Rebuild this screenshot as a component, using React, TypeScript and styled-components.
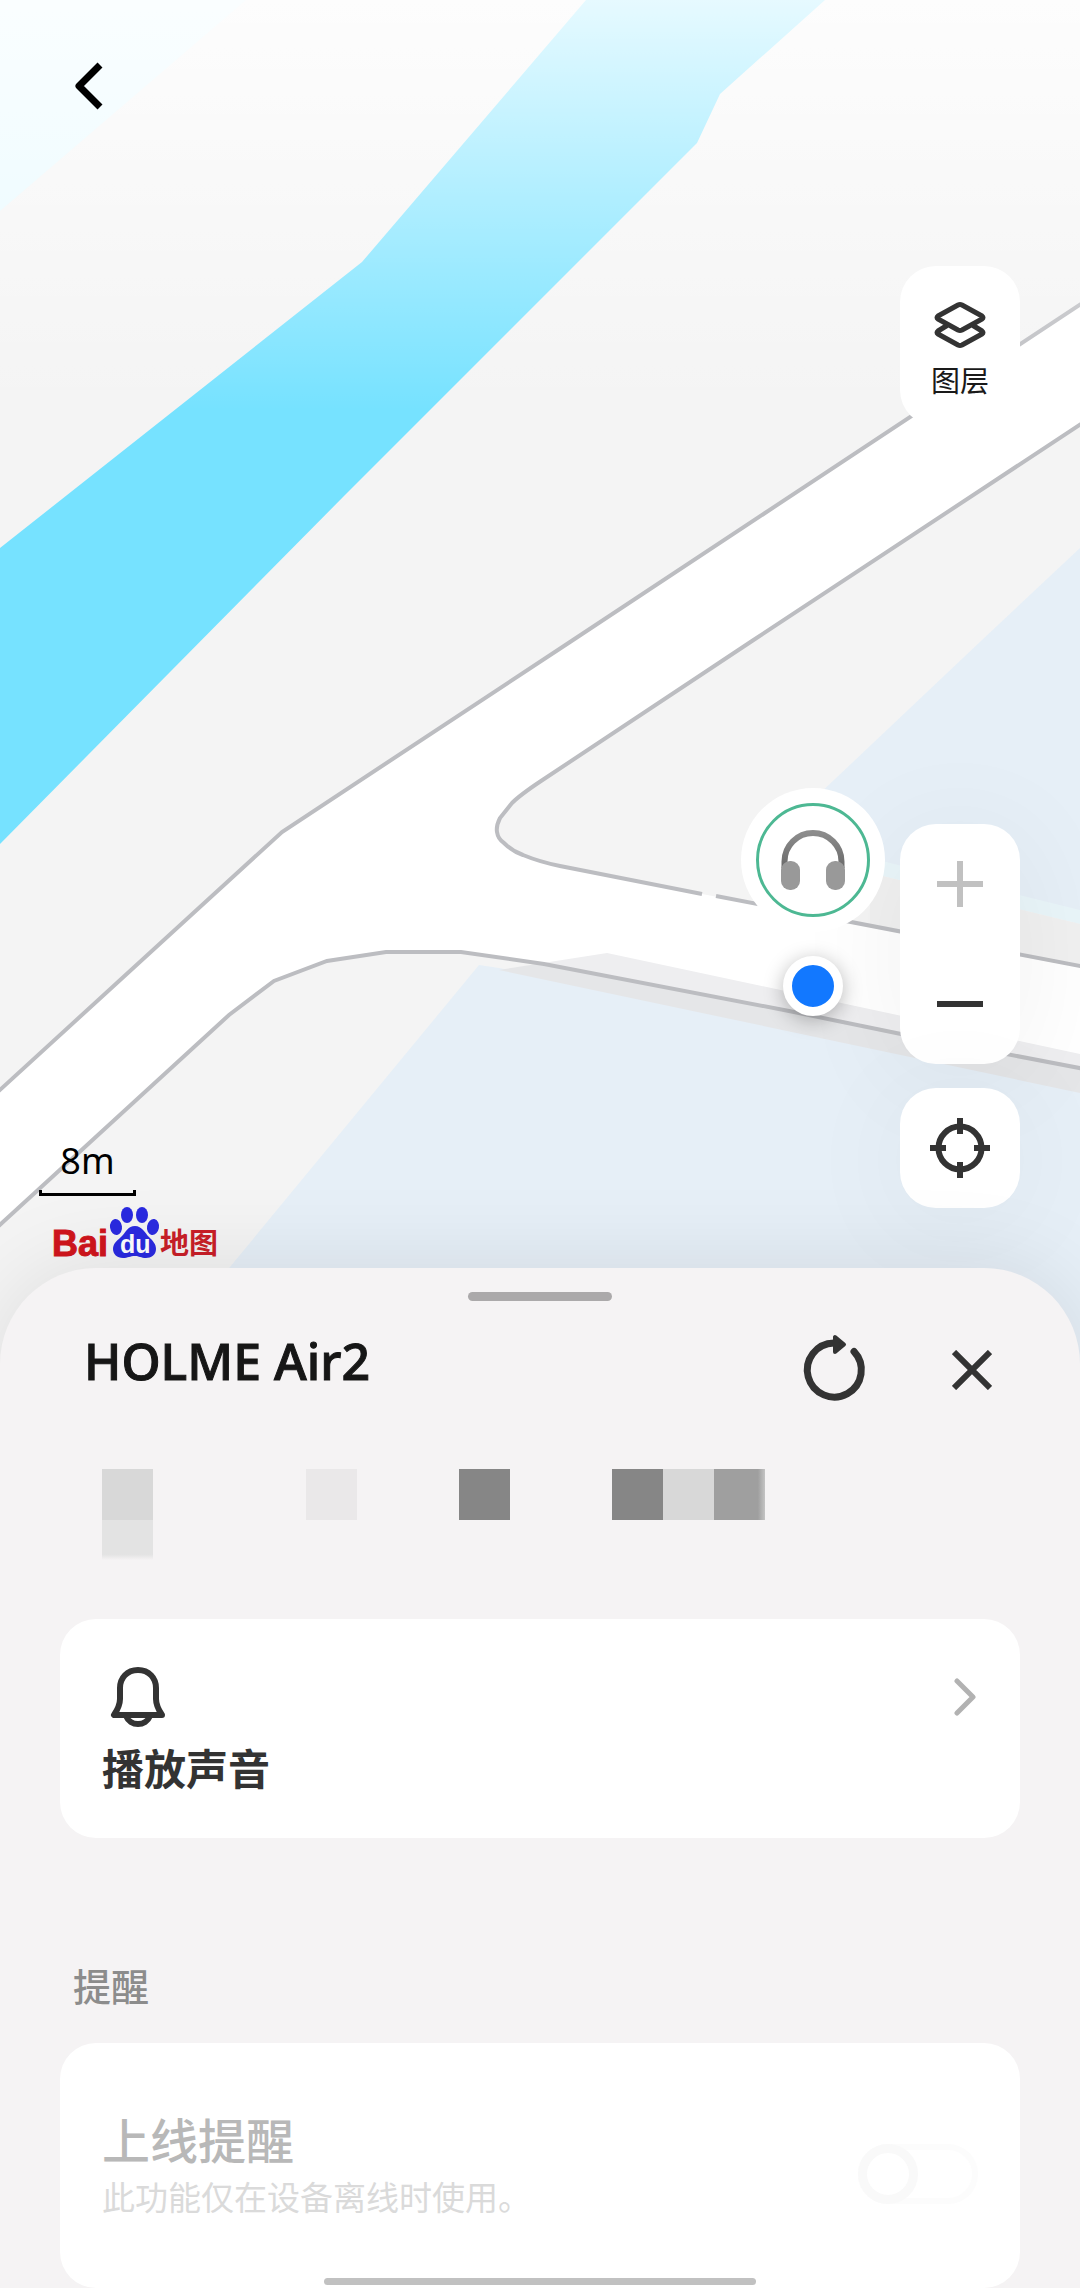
import React from 'react';
import styled, { createGlobalStyle } from 'styled-components';

const GlobalStyle = createGlobalStyle`
  *, *::before, *::after { box-sizing: border-box; }
  html, body { margin: 0; padding: 0; }
  body {
    background: #f5f3f4;
    color: #333;
    font-family: "Noto Sans", "Noto Sans CJK SC", sans-serif;
  }
  h1, h2, p { margin: 0; }
  button { font: inherit; color: inherit; padding: 0; border: 0; background: none; cursor: pointer; }
`;

const Page = styled.main`
  display: flex;
  flex-direction: column;
  min-height: 100vh;
`;

/* Map */

const MapArea = styled.section`
  position: relative;
  height: 1364px;
  overflow: hidden;
  background: #f4f4f4;
`;

const MapCanvas = styled.svg`
  display: block;
  width: 100%;
  height: 100%;
`;

const TopFade = styled.div`
  position: absolute;
  inset: 0 0 auto;
  height: 410px;
  background: linear-gradient(rgba(255, 255, 255, 0.82), rgba(255, 255, 255, 0));
`;

const BackButton = styled.button`
  position: absolute;
  left: 40px;
  top: 38px;
  width: 96px;
  height: 96px;
  display: grid;
  place-items: center;
`;

const floating = `
  width: 120px;
  background: #fff;
  border-radius: 36px;
`;

const LayersButton = styled.button`
  ${floating}
  position: absolute;
  right: 60px;
  top: 266px;
  height: 160px;
  padding-top: 6px;
  display: flex;
  flex-direction: column;
  align-items: center;
  justify-content: center;
  gap: 12px;
  font-family: "Noto Sans CJK SC", sans-serif;
  font-size: 29px;
  line-height: 36px;
  color: #1a1a1a;
`;

const MapControls = styled.div`
  position: absolute;
  right: 60px;
  bottom: 156px;
  display: flex;
  flex-direction: column;
  gap: 24px;
`;

const ZoomPanel = styled.div`
  ${floating}
  box-shadow: 0 12px 120px rgba(0, 0, 0, 0.06);
`;

const ControlButton = styled.button`
  width: 120px;
  height: 120px;
  display: grid;
  place-items: center;
`;

const LocateButton = styled(ControlButton)`
  ${floating}
  box-shadow: 0 12px 120px rgba(0, 0, 0, 0.05);
`;

const DevicePin = styled.div`
  position: absolute;
  right: 195px;
  top: 788px;
  width: 144px;
  height: 144px;
  display: grid;
  place-items: center;
  border-radius: 50%;
  background: #fff;
`;

const PinRing = styled.div`
  width: 114px;
  height: 114px;
  display: grid;
  place-items: center;
  border: 3px solid #4db893;
  border-radius: 50%;
`;

const LocationDot = styled.div`
  position: absolute;
  right: 237px;
  top: 956px;
  width: 60px;
  height: 60px;
  border: 9px solid #fff;
  border-radius: 50%;
  background: #1278ff;
  box-shadow: 0 4px 20px rgba(0, 0, 0, 0.28);
`;

const MapLegend = styled.div`
  position: absolute;
  left: 39px;
  bottom: 90px;
  display: flex;
  flex-direction: column;
  align-items: flex-start;
`;

const ScaleBar = styled.div`
  width: 97px;
  height: 58px;
  position: relative;
  text-align: center;
  font-size: 36px;
  line-height: 46px;
  color: #000;

  &::after {
    content: "";
    position: absolute;
    inset: auto 0 0;
    height: 6px;
    border: 3px solid #000;
    border-top: 0;
  }
`;

const MapLogo = styled.svg`
  width: 184px;
  height: 68px;
  margin: 10px 0 0 12px;
`;

/* Sheet */

const Sheet = styled.section`
  position: relative;
  flex: 1;
  margin-top: -96px;
  padding: 24px 60px 0;
  display: flex;
  flex-direction: column;
  border-radius: 96px 96px 0 0;
  background: #f5f3f4;
  box-shadow: 0 0 90px rgba(0, 0, 0, 0.1);
`;

const Handle = styled.div`
  width: 144px;
  height: 9px;
  align-self: center;
  border-radius: 5px;
  background: #aba9aa;
`;

const SheetHeader = styled.header`
  display: flex;
  align-items: flex-start;
  gap: 42px;
  margin-top: 21px;
  padding-left: 24px;
`;

const DeviceName = styled.h1`
  flex: 1;
  font-size: 50px;
  font-weight: 500;
  line-height: 78px;
  color: #161616;
  -webkit-text-stroke: 1px #161616;
`;

const IconButton = styled.button`
  width: 96px;
  height: 96px;
  display: grid;
  place-items: center;
`;

const Mosaic = styled.div`
  display: grid;
  grid-template-columns: repeat(13, 51px);
  grid-template-rows: 51px 40px;
  margin: 51px 0 59px 42px;
`;

const Tile = styled.span<{ $col: number; $row: number; $fill: string }>`
  grid-column: ${(p) => p.$col};
  grid-row: ${(p) => p.$row};
  background: ${(p) => p.$fill};
`;

const cardBase = `
  width: 100%;
  border-radius: 36px;
  background: #fff;
`;

const ActionCard = styled.button`
  ${cardBase}
  height: 219px;
  padding: 42px 42px 0;
  display: flex;
  align-items: flex-start;
  justify-content: space-between;
  text-align: left;
`;

const ActionBody = styled.span`
  display: flex;
  flex-direction: column;
  gap: 6px;
`;

const ActionLabel = styled.span`
  font-size: 42px;
  font-weight: 700;
  line-height: 60px;
`;

const ChevronBox = styled.span`
  height: 72px;
  display: flex;
  align-items: center;
`;

const SectionLabel = styled.h2`
  margin: 118px 0 27px;
  padding-left: 13px;
  font-size: 38px;
  font-weight: 500;
  line-height: 60px;
  color: #8c8c8c;
`;

const SettingCard = styled.label`
  ${cardBase}
  height: 245px;
  padding: 16px 42px 0;
  display: flex;
  align-items: center;
  justify-content: space-between;
`;

const SettingText = styled.span`
  display: flex;
  flex-direction: column;
  margin-bottom: 18px;
`;

const SettingTitle = styled.span`
  font-size: 48px;
  font-weight: 500;
  line-height: 66px;
  color: #b8b8b8;
`;

const SettingHint = styled.span`
  font-size: 33px;
  line-height: 48px;
  color: #dadada;
`;

const Toggle = styled.input`
  appearance: none;
  margin: 0;
  width: 120px;
  height: 60px;
  border: 6px solid #fcfcfc;
  border-radius: 30px;
  background: #fff;

  &::before {
    content: "";
    display: block;
    width: 60px;
    height: 60px;
    margin: -6px;
    border: 9px solid #f9f9f9;
    border-radius: 50%;
    background: #fff;
  }

  &:checked::before { margin-left: 54px; }
`;

const HomeIndicator = styled.div`
  position: fixed;
  left: 30%;
  right: 30%;
  bottom: 3px;
  height: 7px;
  border-radius: 4px;
  background: #c1c1c1;
`;

const tiles = [
  { col: 1, row: 1, fill: '#d8d8d8' },
  { col: 1, row: 2, fill: 'linear-gradient(#e3e3e3 86%, #f5f3f4)' },
  { col: 5, row: 1, fill: '#eae8e9' },
  { col: 8, row: 1, fill: '#868686' },
  { col: 11, row: 1, fill: '#868686' },
  { col: 12, row: 1, fill: '#d8d8d8' },
  { col: 13, row: 1, fill: 'linear-gradient(90deg, #9f9f9f 86%, #c4c4c4)' },
];

const roadNorth = 'M1090 298 L570 642 L282 832 L-10 1099';
const roadInner =
  'M1090 418 L752 641 L541 781 Q520 795 512 803 L500 818 Q496 826 497 832 Q498 839 504 843 Q512 851 523 855 Q540 862 560 866 L702 894';
const roadInnerEast = 'M716 896 L1090 968';
const roadSouth =
  'M-10 1234 L229 1015 L274 981 L327 961 L386 952 L461 952 L544 964 L789 1011 L901 1034 L1090 1070';

function MapDrawing() {
  return (
    <MapCanvas viewBox="0 0 1080 1364" preserveAspectRatio="xMidYMin slice" aria-hidden="true">
      <defs>
        <clipPath id="road">
          <path d="M1090 298 L570 642 L282 832 L-10 1099 L-10 1234 L229 1015 L274 981 L327 961 L386 952 L461 952 L544 964 L789 1011 L1090 1070 L1090 967 L702 894 L560 866 L497 826 L541 781 L1090 418 Z" />
        </clipPath>
      </defs>
      <rect width="1080" height="1364" fill="#f4f4f4" />
      <path d="M0 0H246L0 211Z" fill="#e6faff" />
      <path d="M586 0H825L720 94L697 143L344 496L0 844V548L362 262Z" fill="#76e2ff" />
      <path d="M1080 548L982 640L760 850L885 870L1080 915Z" fill="#e6eff7" />
      <path d="M870 858L1080 910V924L870 873Z" fill="#e9f5f9" />
      <path d="M870 873L1080 924V967L870 930Z" fill="#f0f0f0" />
      <path d="M479 965L150 1364H1080V1090L499 968Z" fill="#e6eff7" />
      <path d="M499 970L607 953L1080 1054V1093Z" fill="#e5e6e8" />
      <path
        d="M1090 298 L570 642 L282 832 L-10 1099 L-10 1234 L229 1015 L274 981 L327 961 L386 952 L461 952 L544 964 L789 1011 L1090 1070 L1090 967 L702 894 L560 866 Q540 862 523 855 Q512 851 504 843 Q498 839 497 832 Q496 826 500 818 L512 803 Q520 795 541 781 L1090 418 Z"
        fill="#fff"
      />
      <path d="M499 970L607 953L1080 1054V1093Z" fill="#eeeef0" clipPath="url(#road)" />
      <g fill="none" stroke="#bcbdc1" strokeWidth="4">
        <path d={roadNorth} />
        <path d={roadInner} />
        <path d={roadInnerEast} />
        <path d={roadSouth} />
      </g>
    </MapCanvas>
  );
}

function BaiduLogo() {
  return (
    <MapLogo viewBox="0 0 184 68" role="img" aria-label="Baidu 地图">
      <text x="1" y="50" fill="#d0151c" stroke="#d0151c" strokeWidth="1" fontFamily="Liberation Sans, sans-serif" fontWeight="700" fontSize="36">
        Bai
      </text>
      <g fill="#2a2ae0">
        <ellipse cx="65" cy="21" rx="6" ry="8" transform="rotate(-8 65 21)" />
        <ellipse cx="76" cy="9" rx="6" ry="8" />
        <ellipse cx="91" cy="9" rx="6" ry="8" />
        <ellipse cx="102" cy="21" rx="6" ry="8" transform="rotate(10 102 21)" />
        <path d="M84 20C91 20 94 27 98 31C102 35 105 38 105 43C105 49 100 52 95 52C90 52 88 50 84 50C79 50 77 52 72 52C66 52 62 48 62 43C62 37 67 34 71 30C75 26 77 20 84 20Z" />
      </g>
      <text x="69" y="47" fill="#fff" fontFamily="Liberation Sans, sans-serif" fontWeight="700" fontSize="25">
        du
      </text>
      <text x="109" y="48" fill="#c91f28" fontFamily="Noto Sans CJK SC, sans-serif" fontWeight="700" fontSize="29">
        地图
      </text>
    </MapLogo>
  );
}

export default function App() {
  return (
    <>
      <GlobalStyle />
      <Page>
        <MapArea aria-label="地图">
          <MapDrawing />
          <TopFade />
          <BackButton type="button" aria-label="返回">
            <svg width="48" height="48" viewBox="0 0 48 48" fill="none" stroke="#000" strokeWidth="7" strokeLinejoin="round">
              <path d="M36 3L15 24L36 45" />
            </svg>
          </BackButton>

          <LayersButton type="button">
            <svg width="54" height="48" viewBox="0 0 54 48" fill="none" stroke="#333" strokeWidth="5" strokeLinejoin="round">
              <path d="M25 4Q27 3 29 4L49 15Q51 16.500 49 18L29 29Q27 30 25 29L5 18Q3 16.500 5 15Z" />
              <path d="M14 24.500L5 30Q3 31.500 5 33L25 44Q27 45 29 44L49 33Q51 31.500 49 30L40 24.500" />
            </svg>
            图层
          </LayersButton>

          <MapControls>
            <ZoomPanel>
              <ControlButton type="button" aria-label="放大">
                <svg width="46" height="46" viewBox="0 0 46 46" fill="none" stroke="#c1c1c1" strokeWidth="6">
                  <path d="M23 0V46M0 23H46" />
                </svg>
              </ControlButton>
              <ControlButton type="button" aria-label="缩小">
                <svg width="46" height="46" viewBox="0 0 46 46" fill="none" stroke="#333" strokeWidth="6">
                  <path d="M0 23H46" />
                </svg>
              </ControlButton>
            </ZoomPanel>
            <LocateButton type="button" aria-label="定位">
              <svg width="60" height="60" viewBox="0 0 60 60" fill="none" stroke="#333" strokeWidth="6">
                <circle cx="30" cy="30" r="21.500" />
                <path d="M30 0V16M30 44V60M0 30H16M44 30H60" />
              </svg>
            </LocateButton>
          </MapControls>

          <DevicePin>
            <PinRing>
              <svg width="64" height="60" viewBox="0 0 64 60" fill="none">
                <defs>
                  <linearGradient id="band" x1="0" y1="0" x2="0" y2="1">
                    <stop offset="0" stopColor="#8c8c8c" />
                    <stop offset="1" stopColor="#6a6a6a" />
                  </linearGradient>
                </defs>
                <path d="M3.500 38V31.500A28.500 28.500 0 0 1 60.500 31.500V38" stroke="url(#band)" strokeWidth="6" />
                <rect x="0" y="31" width="19" height="29" rx="9" fill="#999" />
                <rect x="45" y="31" width="19" height="29" rx="9" fill="#999" />
              </svg>
            </PinRing>
          </DevicePin>
          <LocationDot />

          <MapLegend>
            <ScaleBar>8m</ScaleBar>
            <BaiduLogo />
          </MapLegend>
        </MapArea>

        <Sheet>
          <Handle />
          <SheetHeader>
            <DeviceName>HOLME Air2</DeviceName>
            <IconButton type="button" aria-label="刷新">
              <svg width="72" height="72" viewBox="0 0 72 72" fill="none" stroke="#333" strokeWidth="7" strokeLinecap="round">
                <path d="M56 17.500A27 27 0 1 1 36 9" />
                <path d="M37 3V18L46 10.500Z" fill="#333" strokeWidth="4" strokeLinejoin="round" />
              </svg>
            </IconButton>
            <IconButton type="button" aria-label="关闭">
              <svg width="40" height="40" viewBox="0 0 40 40" stroke="#333" strokeWidth="6">
                <path d="M2 2L38 38M38 2L2 38" />
              </svg>
            </IconButton>
          </SheetHeader>

          <Mosaic aria-hidden="true">
            {tiles.map((t) => (
              <Tile key={`${t.col}-${t.row}`} $col={t.col} $row={t.row} $fill={t.fill} />
            ))}
          </Mosaic>

          <ActionCard type="button">
            <ActionBody>
              <svg width="72" height="72" viewBox="0 0 72 72" fill="none" stroke="#333" strokeWidth="6" strokeLinejoin="round">
                <path d="M36 9C25 9 18 17 18 27V38C18 44 16 48 12 54H60C56 48 54 44 54 38V27C54 17 47 9 36 9Z" />
                <path d="M24 55C26 60 31 63 36 63C41 63 46 60 48 55" />
              </svg>
              <ActionLabel>播放声音</ActionLabel>
            </ActionBody>
            <ChevronBox>
              <svg width="24" height="38" viewBox="0 0 24 38" fill="none" stroke="#b2b2b2" strokeWidth="5" strokeLinecap="round" strokeLinejoin="round">
                <path d="M3 3L19 19L3 35" />
              </svg>
            </ChevronBox>
          </ActionCard>

          <SectionLabel>提醒</SectionLabel>
          <SettingCard>
            <SettingText>
              <SettingTitle>上线提醒</SettingTitle>
              <SettingHint>此功能仅在设备离线时使用。</SettingHint>
            </SettingText>
            <Toggle type="checkbox" role="switch" disabled />
          </SettingCard>
        </Sheet>
      </Page>
      <HomeIndicator />
    </>
  );
}
